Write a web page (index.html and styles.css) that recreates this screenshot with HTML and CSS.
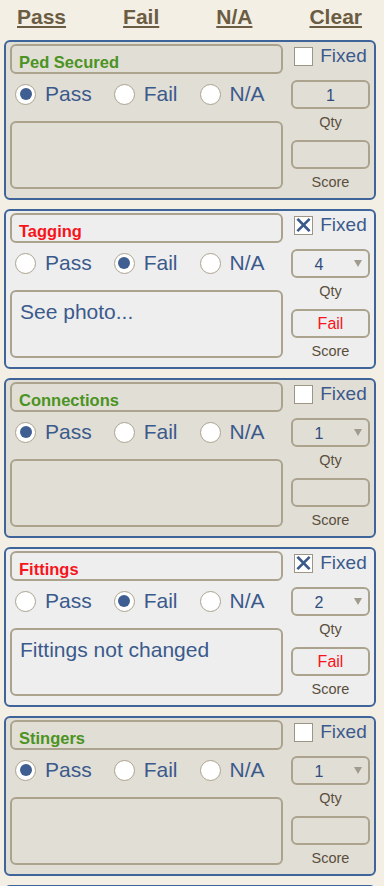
FILE: index.html
```html
<!DOCTYPE html>
<html>
<head>
<meta charset="utf-8">
<link rel="stylesheet" href="styles.css">
</head>
<body>
<div class="header">
  <a class="hlink">Pass</a>
  <a class="hlink">Fail</a>
  <a class="hlink">N/A</a>
  <a class="hlink">Clear</a>
</div>

<div class="card pass">
  <div class="left">
    <div class="title green">Ped Secured</div>
    <div class="radios">
      <span class="radio checked"></span><span class="rlabel">Pass</span>
      <span class="radio"></span><span class="rlabel">Fail</span>
      <span class="radio"></span><span class="rlabel">N/A</span>
    </div>
    <div class="notes"></div>
  </div>
  <div class="right">
    <div class="fixed"><span class="cbox"></span><span class="flabel">Fixed</span></div>
    <div class="select"><span class="sval">1</span></div>
    <div class="lbl">Qty</div>
    <div class="score"></div>
    <div class="lbl">Score</div>
  </div>
</div>

<div class="card fail">
  <div class="left">
    <div class="title red">Tagging</div>
    <div class="radios">
      <span class="radio"></span><span class="rlabel">Pass</span>
      <span class="radio checked"></span><span class="rlabel">Fail</span>
      <span class="radio"></span><span class="rlabel">N/A</span>
    </div>
    <div class="notes">See photo...</div>
  </div>
  <div class="right">
    <div class="fixed"><span class="cbox"><svg viewBox="0 0 18 18" width="18" height="18"><path d="M3.5 3.5 L14.5 14.5 M14.5 3.5 L3.5 14.5" stroke="#3b5a8c" stroke-width="2.8" stroke-linecap="square"/></svg></span><span class="flabel">Fixed</span></div>
    <div class="select"><span class="sval">4</span><span class="arrow"></span></div>
    <div class="lbl">Qty</div>
    <div class="score redtxt">Fail</div>
    <div class="lbl">Score</div>
  </div>
</div>

<div class="card pass">
  <div class="left">
    <div class="title green">Connections</div>
    <div class="radios">
      <span class="radio checked"></span><span class="rlabel">Pass</span>
      <span class="radio"></span><span class="rlabel">Fail</span>
      <span class="radio"></span><span class="rlabel">N/A</span>
    </div>
    <div class="notes"></div>
  </div>
  <div class="right">
    <div class="fixed"><span class="cbox"></span><span class="flabel">Fixed</span></div>
    <div class="select"><span class="sval">1</span><span class="arrow"></span></div>
    <div class="lbl">Qty</div>
    <div class="score"></div>
    <div class="lbl">Score</div>
  </div>
</div>

<div class="card fail">
  <div class="left">
    <div class="title red">Fittings</div>
    <div class="radios">
      <span class="radio"></span><span class="rlabel">Pass</span>
      <span class="radio checked"></span><span class="rlabel">Fail</span>
      <span class="radio"></span><span class="rlabel">N/A</span>
    </div>
    <div class="notes">Fittings not changed</div>
  </div>
  <div class="right">
    <div class="fixed"><span class="cbox"><svg viewBox="0 0 18 18" width="18" height="18"><path d="M3.5 3.5 L14.5 14.5 M14.5 3.5 L3.5 14.5" stroke="#3b5a8c" stroke-width="2.8" stroke-linecap="square"/></svg></span><span class="flabel">Fixed</span></div>
    <div class="select"><span class="sval">2</span><span class="arrow"></span></div>
    <div class="lbl">Qty</div>
    <div class="score redtxt">Fail</div>
    <div class="lbl">Score</div>
  </div>
</div>

<div class="card pass">
  <div class="left">
    <div class="title green">Stingers</div>
    <div class="radios">
      <span class="radio checked"></span><span class="rlabel">Pass</span>
      <span class="radio"></span><span class="rlabel">Fail</span>
      <span class="radio"></span><span class="rlabel">N/A</span>
    </div>
    <div class="notes"></div>
  </div>
  <div class="right">
    <div class="fixed"><span class="cbox"></span><span class="flabel">Fixed</span></div>
    <div class="select"><span class="sval">1</span><span class="arrow"></span></div>
    <div class="lbl">Qty</div>
    <div class="score"></div>
    <div class="lbl">Score</div>
  </div>
</div>

<div class="card pass"></div>
</body>
</html>
```

FILE: styles.css
```css
* { box-sizing: border-box; }
html, body { margin: 0; padding: 0; }
body {
  background: #f3efe4;
  font-family: "Liberation Sans", Arial, Helvetica, sans-serif;
  width: 384px;
  height: 886px;
  overflow: hidden;
}
.header {
  height: 40px;
  display: flex;
  justify-content: space-between;
  padding: 6px 22px 0 17px;
}
.hlink {
  font-weight: bold;
  font-size: 21px;
  line-height: 22px;
  color: #6b5c43;
  text-decoration: underline;
  text-decoration-thickness: 2px;
  text-underline-offset: 2px;
}
.card {
  margin: 0 0 9px 4px;
  width: 372px;
  height: 160px;
  border: 2px solid #3f649a;
  border-radius: 6px;
  padding: 2px 4px 0 4px;
  display: flex;
  gap: 8px;
}
.card.pass { background: #e1ded6; }
.card.fail { background: #eeeeee; }
.left { width: 273px; display: flex; flex-direction: column; }
.right { width: 79px; display: flex; flex-direction: column; align-items: stretch; }
.title {
  height: 30px;
  border: 2px solid #aca38f;
  border-radius: 6px;
  padding: 5.5px 0 0 7px;
  font-weight: bold;
  font-size: 16.5px;
  line-height: 20px;
}
.green { color: #4b9322; }
.red { color: #f8141c; }
.radios {
  height: 40px;
  display: flex;
  align-items: center;
  padding-left: 5px;
}
.radio {
  width: 21px;
  height: 21px;
  border-radius: 50%;
  border: 1.5px solid #aca38f;
  background: #fff;
  flex: none;
  display: flex;
  align-items: center;
  justify-content: center;
}
.radio.checked::after {
  content: "";
  width: 12px;
  height: 12px;
  border-radius: 50%;
  background: #3f5f92;
}
.rlabel {
  font-size: 21px;
  color: #3b5a8c;
  margin-left: 9px;
  margin-right: 22px;
  line-height: 24px;
}
.notes {
  margin-top: 7px;
  height: 68px;
  border: 2px solid #aca38f;
  border-radius: 6px;
  padding: 8px 8px;
  font-size: 21px;
  line-height: 24px;
  color: #3b5a8c;
}
.fixed {
  height: 24px;
  margin-top: 0;
  margin-bottom: 12px;
  display: flex;
  align-items: center;
  justify-content: center;
}
.cbox {
  width: 19px;
  height: 19px;
  border: 1px solid #9d9686;
  background: #fff;
  display: flex;
  align-items: center;
  justify-content: center;
}
.cbox svg { display: block; }
.flabel {
  margin-left: 7px;
  font-size: 19px;
  color: #3b5a8c;
  line-height: 22px;
}
.select {
  height: 29px;
  border: 2px solid #aca38f;
  border-radius: 6px;
  display: flex;
  align-items: center;
}
.sval {
  flex: 1;
  text-align: center;
  font-size: 16px;
  color: #2f4d7e;
  padding-top: 2px;
}
.arrow {
  width: 0;
  height: 0;
  border-left: 4px solid transparent;
  border-right: 4px solid transparent;
  border-top: 7px solid #a19b8e;
  margin-left: 9px;
  margin-right: 6px;
}
.lbl {
  height: 28px;
  line-height: 26px;
  text-align: center;
  font-size: 14.5px;
  color: #5a4e3d;
}
.lbl + .score { margin-top: 3px; }
.score {
  height: 29px;
  border: 2px solid #aca38f;
  border-radius: 6px;
  text-align: center;
  font-size: 16px;
  line-height: 26px;
}
.redtxt { color: #f8141c; }
```
